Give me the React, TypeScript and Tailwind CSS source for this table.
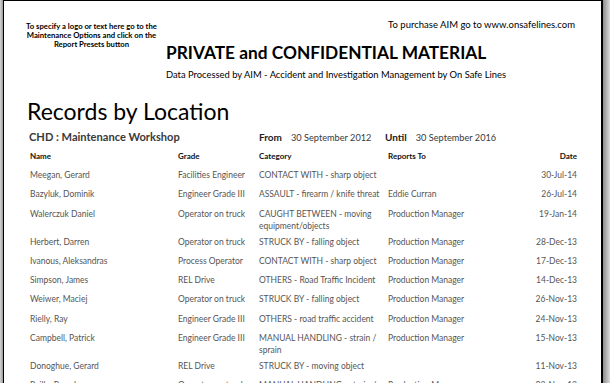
import React from 'react';

type Row = {
  name: string;
  grade: string;
  category: string;
  reportsTo: string;
  date: string;
  tall?: boolean;
};

const rows: Row[] = [
  { name: 'Meegan, Gerard', grade: 'Facilities Engineer', category: 'CONTACT WITH - sharp object', reportsTo: '', date: '30-Jul-14' },
  { name: 'Bazyluk, Dominik', grade: 'Engineer Grade III', category: 'ASSAULT - firearm / knife threat', reportsTo: 'Eddie Curran', date: '26-Jul-14' },
  { name: 'Walerczuk Daniel', grade: 'Operator on truck', category: 'CAUGHT BETWEEN - moving equipment/objects', reportsTo: 'Production Manager', date: '19-Jan-14', tall: true },
  { name: 'Herbert, Darren', grade: 'Operator on truck', category: 'STRUCK BY - falling object', reportsTo: 'Production Manager', date: '28-Dec-13' },
  { name: 'Ivanous, Aleksandras', grade: 'Process Operator', category: 'CONTACT WITH - sharp object', reportsTo: 'Production Manager', date: '17-Dec-13' },
  { name: 'Simpson, James', grade: 'REL Drive', category: 'OTHERS - Road Traffic Incident', reportsTo: 'Production Manager', date: '14-Dec-13' },
  { name: 'Weiwer, Maciej', grade: 'Operator on truck', category: 'STRUCK BY - falling object', reportsTo: 'Production Manager', date: '26-Nov-13' },
  { name: 'Rielly, Ray', grade: 'Engineer Grade III', category: 'OTHERS - road traffic accident', reportsTo: 'Production Manager', date: '24-Nov-13' },
  { name: 'Campbell, Patrick', grade: 'Engineer Grade III', category: 'MANUAL HANDLING - strain / sprain', reportsTo: 'Production Manager', date: '15-Nov-13', tall: true },
  { name: 'Donoghue, Gerard', grade: 'REL Drive', category: 'STRUCK BY - moving object', reportsTo: '', date: '11-Nov-13' },
  { name: 'Reilly, Brendan', grade: 'Operator on truck', category: 'MANUAL HANDLING - strain / sprain', reportsTo: 'Production Manager', date: '02-Nov-13', tall: true },
];

const font = { fontFamily: 'Lato, "Open Sans", sans-serif' };

export default function App() {
  return (
    <div className="w-[610px] h-[383px] overflow-hidden flex bg-[#b8b8b8]" style={font}>
      {/* left shadow strip */}
      <div className="w-[3px] shrink-0 bg-gradient-to-r from-[#d4d4d4] to-[#9a9a9a]" />

      {/* report page */}
      <div className="w-[600px] shrink-0 bg-white border-t border-l border-r-2 border-black">
        {/* header */}
        <div className="flex h-[95px]">
          <div className="w-[175px] pt-[21px] text-center text-[7.7px] leading-[9px] font-bold text-black">
            To specify a logo or text here go to the
            <br />
            Maintenance Options and click on the
            <br />
            Report Presets button
          </div>
          <div className="flex-1 flex flex-col">
            <div className="text-right pr-[26px] pt-[18px] text-[9.5px] leading-[12px] text-black">
              To purchase AIM go to www.onsafelines.com
            </div>
            <div className="mt-[11px] -ml-[13px] text-[17.3px] leading-[22px] font-bold text-black">
              PRIVATE and CONFIDENTIAL MATERIAL
            </div>
            <div className="-ml-[13px] mt-[5px] text-[9.4px] leading-[12px] text-black">
              Data Processed by AIM - Accident and Investigation Management by On Safe Lines
            </div>
          </div>
        </div>

        {/* title */}
        <div className="pl-[23px] text-[23px] leading-[30px] text-black">Records by Location</div>

        {/* location and dates */}
        <div className="flex items-center h-[20px] mt-[1px] text-[#3a3a3a]">
          <div className="w-[255px] pl-[25px] text-[11.1px] font-bold">CHD : Maintenance Workshop</div>
          <div className="w-[126px] text-[10px]">
            <span className="font-bold text-[#222]">From</span>
            <span className="ml-[9px] text-[9.2px]">30 September 2012</span>
          </div>
          <div className="text-[10px]">
            <span className="font-bold text-[#222]">Until</span>
            <span className="ml-[9px] text-[9.2px]">30 September 2016</span>
          </div>
        </div>

        {/* table header */}
        <div className="flex items-center h-[18px] text-[8px] font-bold text-[#111]">
          <div className="w-[174px] pl-[26px]">Name</div>
          <div className="w-[81px]">Grade</div>
          <div className="w-[129px]">Category</div>
          <div className="w-[130px]">Reports To</div>
          <div className="w-[59px] text-right">Date</div>
        </div>

        {/* table rows */}
        <div className="text-[8.5px] leading-[12px] text-[#555]">
          {rows.map((r) => (
            <div key={r.name} className={r.tall ? 'flex h-[28px] pt-[4px]' : 'flex h-[19.3px] pt-[4px]'}>
              <div className="w-[174px] pl-[26px]">{r.name}</div>
              <div className="w-[81px]">{r.grade}</div>
              <div className="w-[129px] pr-[6px]">{r.category}</div>
              <div className="w-[130px]">{r.reportsTo}</div>
              <div className="w-[59px] text-right">{r.date}</div>
            </div>
          ))}
        </div>
      </div>

      {/* right shadow strip */}
      <div className="flex-1 bg-gradient-to-r from-[#8c8c8c] to-[#dcdcdc]" />
    </div>
  );
}
